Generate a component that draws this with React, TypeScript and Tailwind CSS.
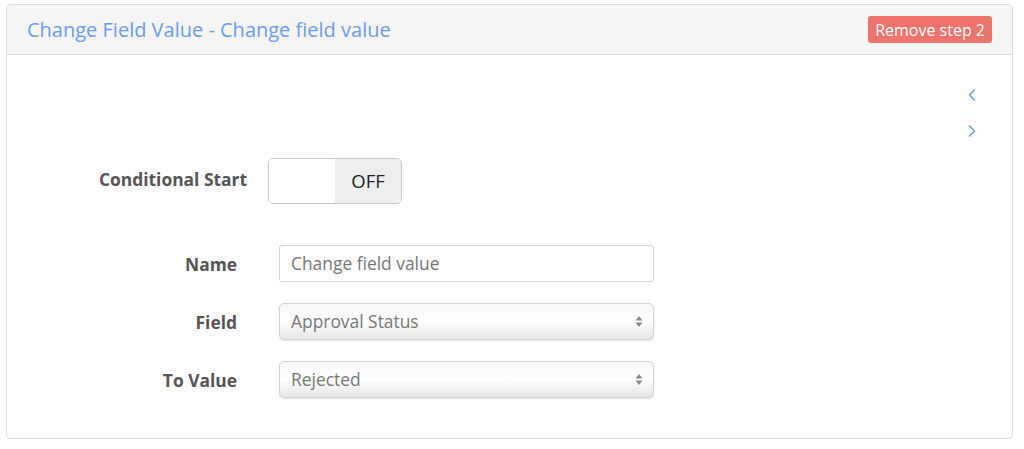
import { ChevronLeft, ChevronRight } from "lucide-react";

const font = { fontFamily: '"Open Sans", "Liberation Sans", sans-serif' };

function SelectArrows() {
  return (
    <svg width="8" height="13" viewBox="0 0 8 13" className="shrink-0">
      <path d="M4 1 L7.5 5.5 H0.5 Z" fill="#8a8a8a" />
      <path d="M4 12 L7.5 7.5 H0.5 Z" fill="#8a8a8a" />
    </svg>
  );
}

function FakeSelect({ value }: { value: string }) {
  return (
    <div className="ml-[42px] flex h-[37px] w-[375px] items-center justify-between rounded-[5px] border border-[#d4d4d4] bg-gradient-to-b from-[#f8f8f8] via-[#fefefe] to-[#e6e6e6] pl-[11px] pr-[10px] text-[17.4px] text-[#777] shadow-[0_1px_2px_rgba(0,0,0,0.12)]">
      <span>{value}</span>
      <SelectArrows />
    </div>
  );
}

export default function App() {
  return (
    <div className="min-h-[449px] w-[1024px] bg-white pl-[6px] pt-[4px]" style={font}>
      <div className="flex h-[435px] w-[1007px] flex-col rounded-[4px] border border-[#dcdcdc]">
        <div className="flex h-[50px] shrink-0 items-center justify-between border-b border-[#dcdcdc] bg-[#f5f5f5] pl-[20px] pr-[20px]">
          <h2 className="text-[20px] text-[#6a9cf6]">Change Field Value - Change field value</h2>
          <button className="flex h-[27px] items-center rounded-[3px] bg-[#f0746e] px-[7px] text-[16px] text-white">
            Remove step 2
          </button>
        </div>
        <div className="flex flex-1 flex-col">
          <div className="flex h-[103px] flex-col items-end justify-end gap-[16px] pb-[17px] pr-[30px] text-[#6a9cf6]">
            <ChevronLeft size={20} strokeWidth={1.8} />
            <ChevronRight size={20} strokeWidth={1.8} />
          </div>
          <div className="flex items-center">
            <label className="-mt-[3px] w-[240px] text-right text-[17.4px] font-bold text-[#555]">Conditional Start</label>
            <div className="ml-[21px] flex h-[46px] w-[134px] overflow-hidden rounded-[5px] border border-[#c8c8c8]">
              <div className="w-[66px] bg-white" />
              <div className="flex flex-1 items-center justify-center bg-[#eee] text-[18.5px] text-[#222]">OFF</div>
            </div>
          </div>
          <div className="mt-[41px] flex flex-col gap-[21px]">
            <div className="flex items-center">
              <label className="mt-[2px] w-[230px] text-right text-[17.4px] font-bold text-[#555]">Name</label>
              <div className="ml-[42px] flex h-[37px] w-[375px] items-center rounded-[3px] border border-[#d4d4d4] bg-white pl-[11px] text-[17.4px] text-[#777]">
                Change field value
              </div>
            </div>
            <div className="flex items-center">
              <label className="mt-[2px] w-[230px] text-right text-[17.4px] font-bold text-[#555]">Field</label>
              <FakeSelect value="Approval Status" />
            </div>
            <div className="flex items-center">
              <label className="mt-[2px] w-[230px] text-right text-[17.4px] font-bold text-[#555]">To Value</label>
              <FakeSelect value="Rejected" />
            </div>
          </div>
        </div>
      </div>
    </div>
  );
}
